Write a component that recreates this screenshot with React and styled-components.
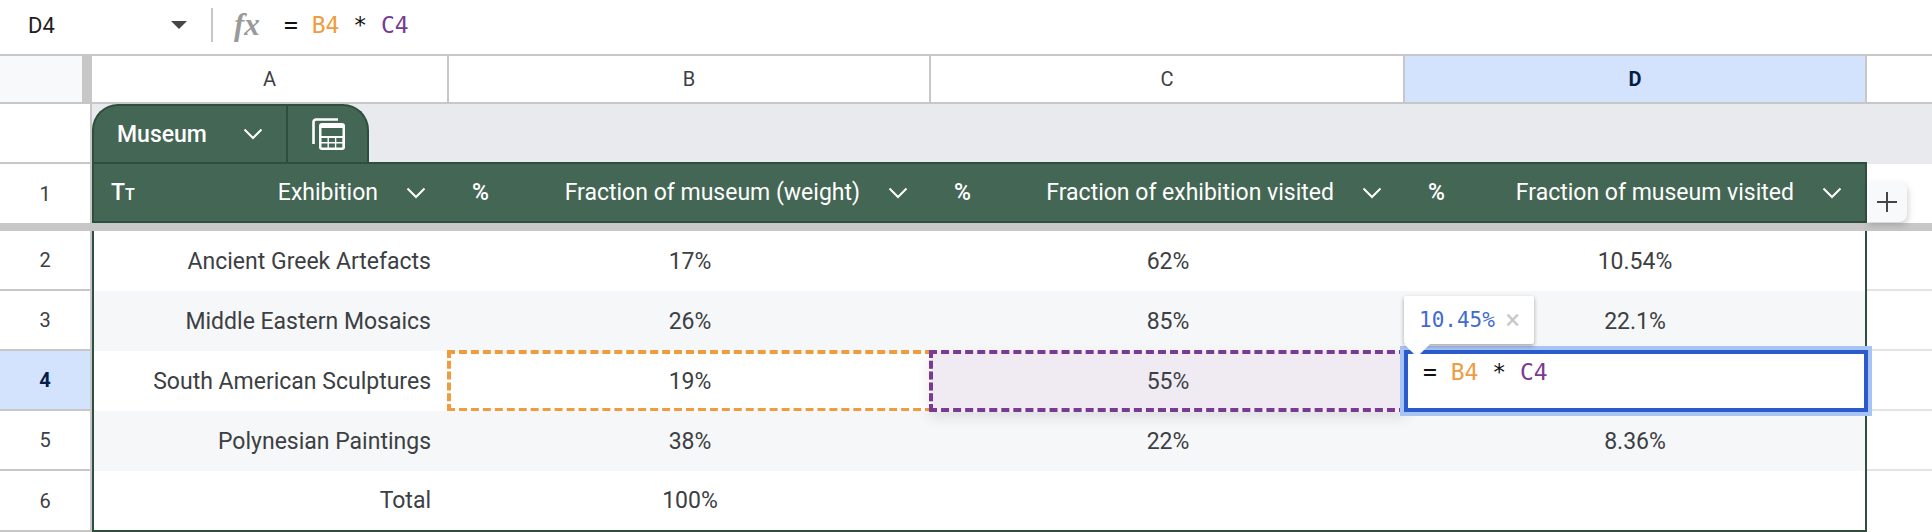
import styled, { createGlobalStyle, css } from "styled-components";

const GlobalStyle = createGlobalStyle`
  html, body {
    margin: 0;
    padding: 0;
    background: #fff;
  }
  * {
    box-sizing: border-box;
  }
`;

const GRID_LINE = "#c7c7c7";
const GREEN = "#446654";
const GREEN_DARK = "#2f4e40";
const ORANGE = "#ef9c3e";
const PURPLE = "#793a92";
const MONO = '"DejaVu Sans Mono", "Liberation Mono", monospace';

const Page = styled.div`
  width: 1932px;
  height: 532px;
  overflow: hidden;
  font-family: Roboto, "Liberation Sans", sans-serif;
  color: #3c4043;
`;

const FormulaBar = styled.div`
  height: 56px;
  display: flex;
  align-items: center;
  border-bottom: 2px solid ${GRID_LINE};
  padding-bottom: 4px;
`;

const NameBox = styled.div`
  width: 213px;
  height: 34px;
  padding: 0 24px 0 28px;
  display: flex;
  align-items: center;
  justify-content: space-between;
  border-right: 2px solid ${GRID_LINE};
  font-size: 22px;
  color: #1f1f1f;
`;

const FxMark = styled.span`
  width: 71px;
  padding-left: 21px;
  font: italic bold 31px "Liberation Serif", serif;
  color: #9a9a9a;
`;

const Formula = styled.span`
  font: 23px/36px ${MONO};
  white-space: pre;
  color: #111;
`;

const Token = styled.span`
  color: ${(p) => p.$color};
`;

const Sheet = styled.div`
  display: grid;
  grid-template-columns: 92px 357px 482px 474px 462px 65px;
  grid-template-rows: 48px 58px 61px 8px repeat(4, 60px) 61px;
`;

const Corner = styled.div`
  background: #f8f9fa;
  border-right: 10px solid ${GRID_LINE};
  border-bottom: 2px solid ${GRID_LINE};
`;

const ColumnHead = styled.div`
  display: flex;
  align-items: center;
  justify-content: center;
  font-size: 20px;
  border-bottom: 2px solid ${GRID_LINE};
  border-right: ${(p) => (p.$plain ? "none" : `2px solid ${GRID_LINE}`)};
  ${(p) =>
    p.$active &&
    css`
      background: #d3e3fd;
      color: #041e49;
      font-weight: 700;
    `}
`;

const TabGutter = styled.div`
  border-right: 2px solid ${GRID_LINE};
`;

const TabStrip = styled.div`
  grid-column: 2 / -1;
  background: #e8eaed;
  display: flex;
  align-items: flex-end;
`;

const Tab = styled.div`
  width: 277px;
  height: 58px;
  display: flex;
  background: ${GREEN};
  border: 2px solid ${GREEN_DARK};
  border-bottom: none;
  border-radius: 26px 26px 0 0;
  color: #fff;
`;

const TabName = styled.div`
  width: 194px;
  padding: 0 23px 0 23px;
  display: flex;
  align-items: center;
  justify-content: space-between;
  border-right: 2px solid ${GREEN_DARK};
  font-size: 23px;
  font-weight: 500;
`;

const TabIcon = styled.div`
  flex: 1;
  display: flex;
  align-items: center;
  justify-content: center;
  padding-left: 1px;
`;

const RowHead = styled.div`
  display: flex;
  align-items: center;
  justify-content: center;
  font-size: 20px;
  border-right: 2px solid ${GRID_LINE};
  border-bottom: 2px solid ${GRID_LINE};
  ${(p) =>
    p.$first &&
    css`
      border-top: 2px solid ${GRID_LINE};
      border-bottom: none;
    `}
  ${(p) =>
    p.$active &&
    css`
      background: #d3e3fd;
      color: #041e49;
      font-weight: 700;
    `}
`;

const HeaderCell = styled.div`
  display: flex;
  align-items: center;
  padding: 0 23px 0 ${(p) => (p.$col === 0 ? "17px" : "23px")};
  background: ${GREEN};
  color: #fff;
  font-size: 23px;
  border-top: 2px solid ${GREEN_DARK};
  border-bottom: 2px solid ${GREEN_DARK};
  ${(p) => p.$col === 0 && css`border-left: 2px solid ${GREEN_DARK};`}
  ${(p) => p.$col === 3 && css`border-right: 2px solid ${GREEN_DARK};`}
`;

const TypeMark = styled.span`
  font-weight: 500;
  font-size: 23px;
`;

const SmallCap = styled.span`
  font-size: 16px;
`;

const HeaderLabel = styled.span`
  margin-left: auto;
  margin-right: 28px;
  white-space: nowrap;
`;

const RightFiller = styled.div`
  position: relative;
  border-top: 2px solid #e8eaed;
`;

const AddColumn = styled.div`
  position: absolute;
  left: 0;
  top: 18px;
  width: 40px;
  height: 40px;
  display: flex;
  align-items: center;
  justify-content: center;
  background: #f8f9fa;
  border-radius: 0 8px 8px 0;
  box-shadow: 1px 3px 6px rgba(60, 64, 67, 0.25);
  z-index: 2;
`;

const FreezeBar = styled.div`
  grid-column: 1 / -1;
  background: ${GRID_LINE};
`;

const Cell = styled.div`
  position: relative;
  display: flex;
  align-items: center;
  justify-content: ${(p) => (p.$col === 0 ? "flex-end" : "center")};
  padding: 0 ${(p) => (p.$col === 0 ? "18px" : "0")};
  font-size: 23px;
  white-space: nowrap;
  background: ${(p) => (p.$tint ? p.$tint : p.$striped ? "#f6f7f9" : "#fff")};
  ${(p) => p.$col === 0 && css`border-left: 2px solid ${GREEN_DARK};`}
  ${(p) => p.$col === 3 && css`border-right: 2px solid ${GREEN_DARK};`}
  ${(p) => p.$last && css`border-bottom: 2px solid ${GREEN_DARK};`}
  ${(p) => p.$raised && css`z-index: 1;`}
  ${(p) => p.$editing && css`z-index: 3;`}
`;

const OuterGutter = styled.div`
  border-bottom: ${(p) => (p.$last ? "none" : "2px solid #e3e3e3")};
`;

// dashed frame that marks a cell referenced by the formula
const RefFrame = styled.div`
  position: absolute;
  inset: -1px -2px;
  border: 4px dashed ${(p) => p.$color};
  ${(p) => p.$shadow && css`box-shadow: 0 6px 12px rgba(60, 64, 67, 0.12);`}
`;

const Editor = styled.div`
  position: absolute;
  left: -1px;
  right: -3px;
  top: -1px;
  bottom: -1px;
  padding-left: 15px;
  background: #fff;
  border: 4px solid #2a5bcb;
  box-shadow: 0 0 0 4px #a8c4f5;
`;

const Tooltip = styled.div`
  position: absolute;
  left: -4px;
  top: -58px;
  width: 130px;
  height: 48px;
  padding: 0 0 0 15px;
  display: flex;
  align-items: center;
  justify-content: space-between;
  background: #fff;
  border-radius: 2px;
  box-shadow: 0 2px 4px rgba(60, 64, 67, 0.45);
  font: 21px ${MONO};
  color: #3f6bd0;

  &::after {
    content: "";
    position: absolute;
    left: 0;
    top: 48px;
    border-left: 13px solid transparent;
    border-right: 13px solid transparent;
    border-top: 13px solid #fff;
  }
`;

const CloseMark = styled.span`
  margin-right: 14px;
  font: 27px Roboto, sans-serif;
  color: #c9c9c9;
`;

const Chevron = ({ color = "#fff" }) => (
  <svg width="20" height="12" viewBox="0 0 20 12" fill="none">
    <path d="M1.5 1.5 L10 10 L18.5 1.5" stroke={color} strokeWidth="2" />
  </svg>
);

const Caret = () => (
  <svg width="16" height="8" viewBox="0 0 16 8">
    <path d="M0 0 H16 L8 8 Z" fill="#444746" />
  </svg>
);

const Plus = () => (
  <svg width="20" height="20" viewBox="0 0 20 20">
    <path d="M10 0 V20 M0 10 H20" stroke="#444746" strokeWidth="2" />
  </svg>
);

const CalcIcon = () => (
  <svg width="33" height="32" viewBox="0 0 33 32" fill="none">
    <path d="M1.5 26 V4 a2.5 2.5 0 0 1 2.5 -2.5 H26" stroke="#fff" strokeWidth="2.6" />
    <rect x="7" y="5" width="26" height="27" rx="3" fill="#fff" />
    <rect x="9.5" y="10" width="21" height="8" fill={GREEN} />
    {[0, 1, 2].map((c) =>
      [0, 1].map((r) => (
        <rect key={`${c}${r}`} x={9.5 + c * 7.4} y={20 + r * 5.5} width="6" height="4" fill={GREEN} />
      ))
    )}
  </svg>
);

const FormulaText = () => (
  <Formula>
    ={" "}<Token $color={ORANGE}>B4</Token> * <Token $color={PURPLE}>C4</Token>
  </Formula>
);

const columns = [
  { mark: "T", label: "Exhibition" },
  { mark: "%", label: "Fraction of museum (weight)" },
  { mark: "%", label: "Fraction of exhibition visited" },
  { mark: "%", label: "Fraction of museum visited" },
];

const rows = [
  { n: 2, cells: ["Ancient Greek Artefacts", "17%", "62%", "10.54%"] },
  { n: 3, cells: ["Middle Eastern Mosaics", "26%", "85%", "22.1%"], striped: true },
  { n: 4, cells: ["South American Sculptures", "19%", "55%", ""], active: true },
  { n: 5, cells: ["Polynesian Paintings", "38%", "22%", "8.36%"], striped: true },
  { n: 6, cells: ["Total", "100%", "", ""], last: true },
];

const App = () => {
  return (
    <Page>
      <GlobalStyle />
      <FormulaBar>
        <NameBox>
          D4
          <Caret />
        </NameBox>
        <FxMark>fx</FxMark>
        <FormulaText />
      </FormulaBar>
      <Sheet>
        <Corner />
        <ColumnHead>A</ColumnHead>
        <ColumnHead>B</ColumnHead>
        <ColumnHead>C</ColumnHead>
        <ColumnHead $active>D</ColumnHead>
        <ColumnHead $plain />

        <TabGutter />
        <TabStrip>
          <Tab>
            <TabName>
              Museum
              <Chevron />
            </TabName>
            <TabIcon>
              <CalcIcon />
            </TabIcon>
          </Tab>
        </TabStrip>

        <RowHead $first>1</RowHead>
        {columns.map((c, i) => (
          <HeaderCell key={c.label} $col={i}>
            <TypeMark>
              {c.mark}
              {c.mark === "T" && <SmallCap>T</SmallCap>}
            </TypeMark>
            <HeaderLabel>{c.label}</HeaderLabel>
            <Chevron />
          </HeaderCell>
        ))}
        <RightFiller>
          <AddColumn>
            <Plus />
          </AddColumn>
        </RightFiller>

        <FreezeBar />

        {rows.map((row) => (
          <>
            <RowHead key={`head-${row.n}`} $active={row.active}>
              {row.n}
            </RowHead>
            {row.cells.map((text, col) => (
              <Cell
                key={`${row.n}-${col}`}
                $col={col}
                $striped={row.striped}
                $last={row.last}
                $tint={row.active && col === 2 ? "#f0ebf3" : undefined}
                $raised={row.active && col === 2}
                $editing={row.active && col === 3}
              >
                {text}
                {row.active && col === 1 && <RefFrame $color={ORANGE} />}
                {row.active && col === 2 && <RefFrame $color={PURPLE} $shadow />}
                {row.active && col === 3 && (
                  <Editor>
                    <FormulaText />
                    <Tooltip>
                      10.45%
                      <CloseMark>×</CloseMark>
                    </Tooltip>
                  </Editor>
                )}
              </Cell>
            ))}
            <OuterGutter key={`side-${row.n}`} $last={row.last} />
          </>
        ))}
      </Sheet>
    </Page>
  );
};

export default App;
